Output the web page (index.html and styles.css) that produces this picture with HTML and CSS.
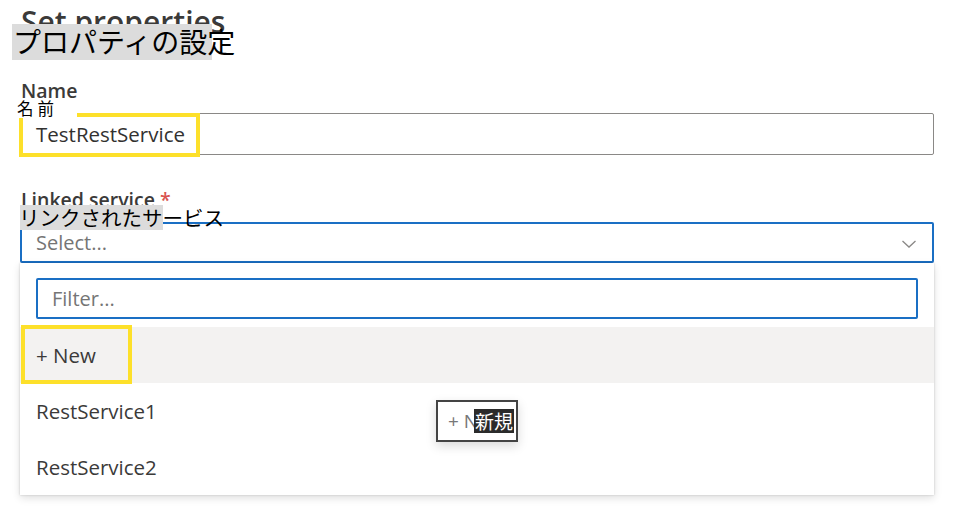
FILE: index.html
```html
<!DOCTYPE html>
<html lang="ja">
<head>
<meta charset="utf-8">
<link rel="stylesheet" href="styles.css">
</head>
<body>
<div class="page">
  <h1 class="title">Set properties</h1>
  <div class="ov ov-title"><span>プロパティの設定</span></div>

  <div class="field">
    <div class="label">Name</div>
    <div class="input name-input">
      <span class="value">TestRestService</span>
      <span class="hl hl-name"></span>
    </div>
  </div>
  <div class="ov ov-name">名前</div>

  <div class="field linked">
    <div class="label">Linked service <span class="req">*</span></div>
    <div class="select">
      <span class="placeholder">Select...</span>
      <svg class="chev" width="16" height="10" viewBox="0 0 16 10"><path d="M1.5 2 L8 8 L14.5 2" fill="none" stroke="#8a8886" stroke-width="1.3"/></svg>
    </div>
    <div class="dropdown">
      <div class="filter"><span class="placeholder">Filter...</span></div>
      <ul class="options">
        <li class="opt opt-new"><span>+ New</span><span class="hl hl-new"></span></li>
        <li class="opt">RestService1</li>
        <li class="opt">RestService2</li>
      </ul>
    </div>
  </div>
  <div class="ov ov-linked"><span>リンクされたサービス</span></div>

  <div class="tooltip"><span class="tt-en">+ N</span><span class="tt-ja">新規</span></div>
</div>
</body>
</html>
```

FILE: styles.css
```css
* { box-sizing: border-box; }
html, body { margin: 0; padding: 0; background: #ffffff; }
body {
  font-family: "Open Sans", "Noto Sans", "Noto Sans CJK JP", sans-serif;
  color: #323130;
  width: 954px;
  height: 513px;
  overflow: hidden;
}
.page {
  position: relative;
  padding: 0 20px;
  width: 954px;
}
.title {
  margin: 0;
  height: 40px;
  padding-top: 4px;
  font-size: 30px;
  line-height: 36px;
  font-weight: 600;
  color: #3b3a39;
  padding-left: 1px;
  white-space: nowrap;
  overflow: hidden;
}
.ov {
  position: absolute;
  font-family: "Noto Sans CJK JP", sans-serif;
  color: #000;
  white-space: nowrap;
}
.ov-title {
  left: 12px; top: 24px;
  width: 200px; height: 36px;
  background: #dcdcdc;
  font-size: 28px;
  line-height: 36px;
}
.ov-title span { position: relative; left: 1px; top: -1px; }
.ov-name {
  left: 17px; top: 99px;
  width: 60px; height: 19px;
  background: #fff;
  font-size: 16.5px;
  line-height: 19px;
  letter-spacing: 4px;
}
.ov-linked {
  left: 20px; top: 205px;
  width: 143px; height: 25px;
  background: #dcdcdc;
  font-size: 20.5px;
  line-height: 25px;
}
.ov-linked span { position: relative; left: -1px; }
.label {
  margin-top: 38px;
  font-size: 19.5px;
  line-height: 26px;
  font-weight: 600;
  padding-left: 1px;
  height: 26px;
  margin-bottom: 9px;
  color: #3b3a39;
}
.linked .label { margin-top: 32px; margin-bottom: 9px; }
.req { color: #d9534f; font-weight: 600; }
.input {
  position: relative;
  height: 42px;
  border: 1px solid #8a8886;
  border-radius: 2px;
  display: flex;
  align-items: center;
  padding-left: 15px;
  font-size: 20.5px;
}
.hl {
  position: absolute;
  border: 4px solid #fde02a;
  pointer-events: none;
}
.hl-name { left: -2px; top: -1px; width: 181px; height: 44px; }
.select {
  height: 41px;
  border: 2px solid #1a6fc4;
  border-radius: 2px;
  display: flex;
  align-items: center;
  justify-content: space-between;
  padding: 0 15px 0 14px;
  font-size: 20px;
}
.placeholder { color: #757575; }
.chev { display: block; margin-top: 3px; }
.dropdown {
  background: #fff;
  box-shadow: 0 3px 8px rgba(0,0,0,0.13), 0 0 2px rgba(0,0,0,0.18);
  padding-top: 15px;
  height: 232px;
}
.filter {
  margin: 0 16px;
  height: 41px;
  border: 2px solid #1a6fc4;
  border-radius: 2px;
  display: flex;
  align-items: center;
  padding-left: 14px;
  font-size: 20px;
}
.options {
  list-style: none;
  margin: 8px 0 0 0;
  padding: 0;
}
.opt {
  position: relative;
  height: 56px;
  display: flex;
  align-items: center;
  padding-left: 16px;
  font-size: 20.5px;
  color: #3b3a39;
}
.opt-new { background: #f3f2f1; }
.hl-new { left: 1px; top: -2px; width: 111px; height: 59px; }
.tooltip {
  position: absolute;
  left: 436px; top: 400px;
  width: 82px; height: 42px;
  border: 2px solid #444;
  background: #fff;
  box-shadow: 0 4px 10px rgba(0,0,0,0.15);
  display: flex;
  align-items: center;
  padding-left: 10px;
  white-space: nowrap;
  overflow: hidden;
}
.tt-en { font-size: 19px; color: #777; width: 26px; overflow: hidden; }
.tt-ja {
  background: #2b2b2b;
  color: #fff;
  font-family: "Noto Sans CJK JP", sans-serif;
  font-size: 19px;
  line-height: 24px;
  height: 24px;
  padding: 0 1px;
}
```
